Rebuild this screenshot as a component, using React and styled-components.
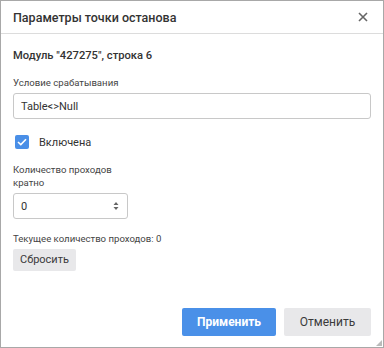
import React from 'react'
import styled, { createGlobalStyle } from 'styled-components'

const Global = createGlobalStyle`
  html, body { margin: 0; padding: 0; background: #fff; }
  body { font-family: Roboto, "Noto Sans", sans-serif; color: #333; }
  * { box-sizing: border-box; }
`

const Dialog = styled.div`
  width: 384px;
  height: 348px;
  border: 1px solid #a8a8a8;
  background: #fff;
  display: flex;
  flex-direction: column;
  position: relative;
`

const Header = styled.div`
  height: 33px;
  flex: none;
  display: flex;
  align-items: center;
  justify-content: space-between;
  padding: 0 12px 0 12px;
  border-bottom: 1px solid #dcdcdc;
  h2 {
    margin: 0;
    font-size: 12.5px;
    font-weight: 500;
    color: #333;
  }
`

const Close = styled.button`
  border: 0;
  background: none;
  padding: 0;
  width: 16px;
  height: 16px;
  display: flex;
  align-items: center;
  justify-content: center;
`

const Body = styled.div`
  flex: 1;
  padding: 15px 12px 0 12px;
  display: flex;
  flex-direction: column;
`

const Module = styled.div`
  font-size: 11.2px;
  font-weight: 500;
  color: #333;
  line-height: 14px;
  margin-bottom: 13px;
`

const Label = styled.div`
  font-size: 9.6px;
  color: #444;
  line-height: 13px;
  margin-top: ${p => p.$mt || 0}px;
  margin-bottom: ${p => p.$mb || 4}px;
  width: ${p => p.$w || 'auto'};
`

const Input = styled.div`
  height: 26px;
  width: ${p => p.$w || '100%'};
  border: 1px solid #c8c8c8;
  border-radius: 3px;
  display: flex;
  align-items: center;
  justify-content: space-between;
  padding: 0 8px 0 7px;
  font-size: 11px;
  color: #333;
`

const CheckRow = styled.label`
  display: flex;
  align-items: center;
  gap: 10px;
  margin: 15px 0 0 2px;
  font-size: 11px;
  color: #333;
  height: 16px;
`

const Box = styled.span`
  width: 14px;
  height: 14px;
  border-radius: 2px;
  background: #4a8fe7;
  display: flex;
  align-items: center;
  justify-content: center;
`

const Btn = styled.button`
  height: ${p => p.$h || 28}px;
  width: ${p => p.$w}px;
  padding: 0;
  border: 0;
  border-radius: 2px;
  font-family: Roboto, "Noto Sans", sans-serif;
  font-size: ${p => p.$fs || 12}px;
  font-weight: ${p => (p.$primary ? 700 : 400)};
  background: ${p => (p.$primary ? '#4a90e8' : '#e8e8ea')};
  color: ${p => (p.$primary ? '#fff' : '#3a3a3a')};
`

const Footer = styled.div`
  flex: none;
  display: flex;
  justify-content: flex-end;
  gap: 8px;
  padding: 0 12px 11px 0;
`

const Grip = styled.svg`
  position: absolute;
  right: 1px;
  bottom: 1px;
`

export default function App() {
  return (
    <>
      <Global />
      <Dialog>
        <Header>
          <h2>Параметры точки останова</h2>
          <Close>
            <svg width="10" height="10" viewBox="0 0 10 10">
              <path d="M1 1L9 9M9 1L1 9" stroke="#666" strokeWidth="1.6" />
            </svg>
          </Close>
        </Header>
        <Body>
          <Module>Модуль "427275", строка 6</Module>
          <Label>Условие срабатывания</Label>
          <Input>Table&lt;&gt;Null</Input>
          <CheckRow>
            <Box>
              <svg width="10" height="8" viewBox="0 0 10 8">
                <path d="M1 4L3.8 6.6L9 1.2" stroke="#fff" strokeWidth="1.6" fill="none" />
              </svg>
            </Box>
            Включена
          </CheckRow>
          <Label $w="110px" $mt={13}>Количество проходов кратно</Label>
          <Input $w="115px">
            0
            <svg width="6" height="10" viewBox="0 0 6 10">
              <path d="M3 1L5.5 4H0.5Z M3 9L0.5 6H5.5Z" fill="#666" />
            </svg>
          </Input>
          <Label $mt={13} $mb={3}>Текущее количество проходов: 0</Label>
          <div>
            <Btn $h={22} $w={63} $fs={11}>Сбросить</Btn>
          </div>
        </Body>
        <Footer>
          <Btn $primary $w={94}>Применить</Btn>
          <Btn $w={87}>Отменить</Btn>
        </Footer>
        <Grip width="6" height="6" viewBox="0 0 6 6">
          <path d="M6 0L0 6H6Z" fill="#bbb" />
        </Grip>
      </Dialog>
    </>
  )
}
